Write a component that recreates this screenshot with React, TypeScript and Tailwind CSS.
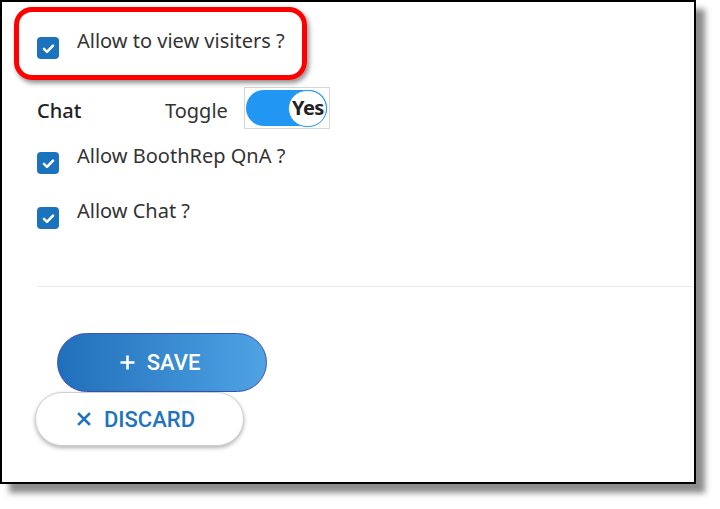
import React from 'react';

const textFont = { fontFamily: '"Noto Sans", "Open Sans", sans-serif' };

function CheckBox() {
  return (
    <span className="flex h-[22px] w-[22px] shrink-0 items-center justify-center rounded-[4px] bg-[#1b72bd]">
      <svg width="15" height="15" viewBox="0 0 14 14" fill="none">
        <path d="M2.8 7.4l2.8 2.7L11.2 4.3" stroke="white" strokeWidth="2.4" strokeLinecap="round" strokeLinejoin="round" />
      </svg>
    </span>
  );
}

function CheckRow({ label, className }: { label: string; className?: string }) {
  return (
    <div className={`flex items-start ${className ?? ''}`}>
      <span className="mt-[9px]"><CheckBox /></span>
      <span className="ml-[18px] text-[20px] leading-[26px] text-[#333]">{label}</span>
    </div>
  );
}

export default function App() {
  return (
    <div className="h-[509px] w-[720px] bg-white" style={textFont}>
      <div className="relative h-[484px] w-[696px] border-2 border-black bg-white shadow-[9px_9px_6px_rgba(0,0,0,0.45)]">
        {/* red annotation */}
        <div className="pointer-events-none absolute left-[12px] top-[5px] h-[73px] w-[293px] rounded-[18px] border-[5px] border-[#f00] shadow-[2px_3px_5px_rgba(0,0,0,0.45)]" />

        <div className="flex flex-col pl-[35px] pt-[26px]">
          <CheckRow label="Allow to view visiters ?" />

          <div className="mt-[28px] flex items-center">
            <span className="mt-[6px] w-[128px] text-[20px] font-medium text-[#222]">Chat</span>
            <span className="mt-[6px] text-[20px] text-[#333]">Toggle</span>
            <div className="ml-[16px] flex h-[42px] w-[86px] items-center justify-center border border-[#d6d6d6]">
              <div className="flex h-[36px] w-[81px] items-center justify-end rounded-full bg-[#2196f3]">
                <span className="flex h-[37px] w-[39px] items-center justify-center rounded-full border border-[#2196f3] bg-white text-[20px] font-bold tracking-[-0.5px] text-[#222]">
                  Yes
                </span>
              </div>
            </div>
          </div>

          <CheckRow label="Allow BoothRep QnA ?" className="mt-[14px]" />
          <CheckRow label="Allow Chat ?" className="mt-[24px]" />

          <div className="mt-[57px] h-px bg-[#ececec]" />

          <div className="flex flex-col" style={{ fontFamily: 'Roboto, sans-serif' }}>
            <button className="ml-[20px] mt-[46px] flex h-[59px] w-[210px] items-center justify-center gap-[12px] rounded-full border border-[#3d4fb8] bg-gradient-to-r from-[#1f6fbb] to-[#4fa3e3] pr-[4px] text-[22px] font-medium text-white">
              <svg width="15" height="15" viewBox="0 0 15 15">
                <path d="M7.5 0.5v14M0.5 7.5h14" stroke="white" strokeWidth="2.6" />
              </svg>
              <span>SAVE</span>
            </button>
            <button className="ml-[-2px] flex h-[54px] w-[209px] items-center justify-center gap-[12px] rounded-full border border-[#d0d0d0] bg-white pr-[8px] text-[22px] font-medium text-[#1f74bd] shadow-[0_2px_4px_rgba(0,0,0,0.3)]">
              <svg width="16" height="16" viewBox="0 0 16 16">
                <path d="M3 3l10 10M13 3L3 13" stroke="#1f74bd" strokeWidth="2.6" strokeLinecap="square" />
              </svg>
              <span>DISCARD</span>
            </button>
          </div>
        </div>
      </div>
    </div>
  );
}
